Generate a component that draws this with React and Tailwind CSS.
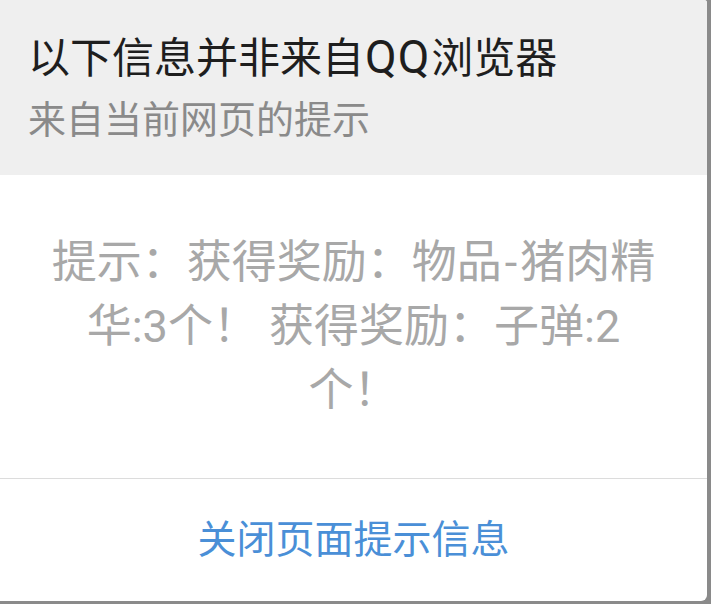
export default function App() {
  const font = { fontFamily: 'Roboto, "Noto Sans CJK SC", "Noto Sans", sans-serif' };
  return (
    <div className="w-[711px] h-[604px] bg-[#8a8a8a] overflow-hidden" style={font}>
      <div className="w-[707px] h-[601px] bg-white rounded-br-[6px] rounded-tr-[3px] overflow-hidden flex flex-col">
        <div className="h-[175px] bg-[#efefef] pl-[28px] pt-[34px] shrink-0">
          <div className="h-[50px] text-[42px] leading-[50px] text-[#1e1e1e] whitespace-nowrap">
            以下信息并非来自<span className="text-[46px] leading-none tracking-[1px] px-[1px]">QQ</span>浏览器
          </div>
          <div className="mt-[13px] text-[38px] leading-[46px] text-[#8a8a8a] whitespace-nowrap">来自当前网页的提示</div>
        </div>
        <div className="h-[303px] shrink-0 flex items-center justify-center">
          <p className="text-center text-[45px] leading-[64px] text-[#a8a8a8] whitespace-nowrap">
            提示：获得奖励：物品<span className="px-[3px]">-</span>猪肉精
            <br />
            华:3个！ 获得奖励：子弹:2
            <br />
            个！
          </p>
        </div>
        <div className="h-px bg-[#dcdcdc] shrink-0" />
        <div className="flex-1 flex items-center justify-center">
          <span className="text-[39px] leading-[48px] text-[#4a8fd7] whitespace-nowrap">关闭页面提示信息</span>
        </div>
      </div>
    </div>
  );
}
